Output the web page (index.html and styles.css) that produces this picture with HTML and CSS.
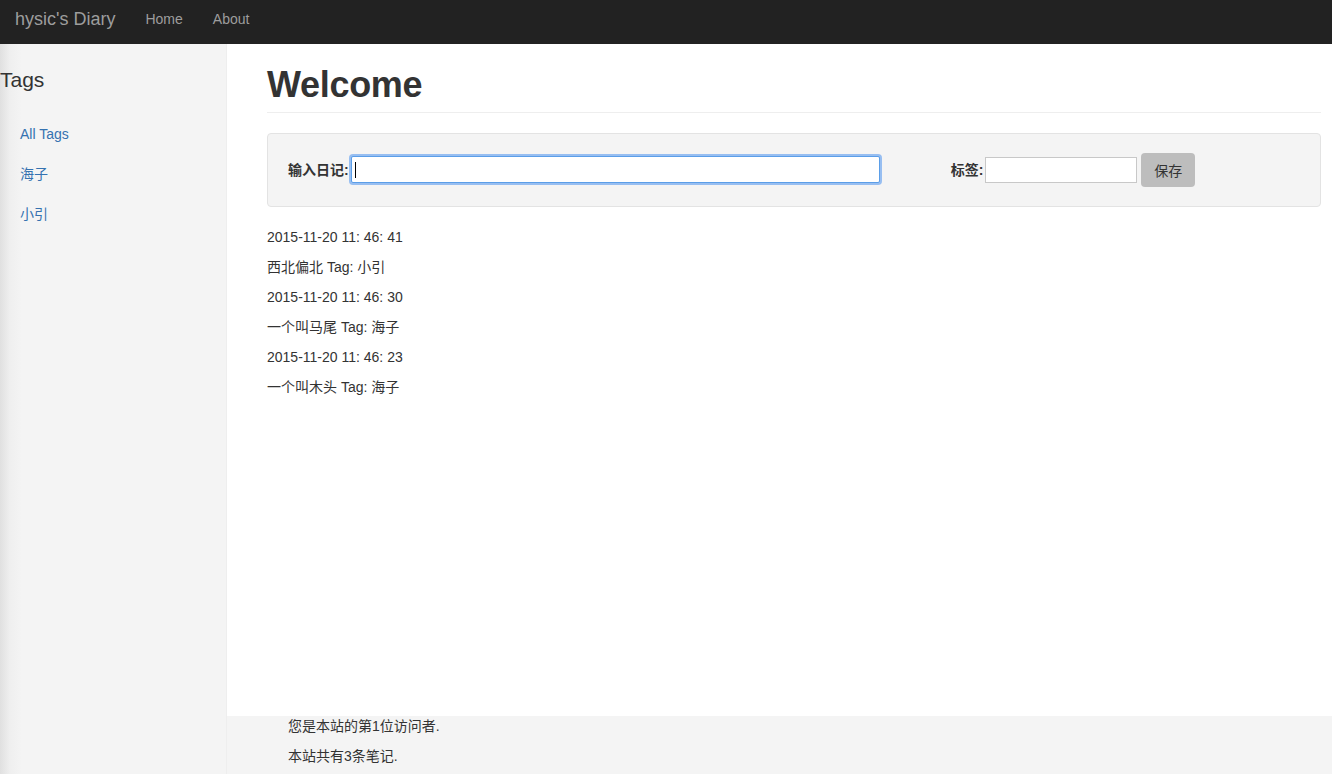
FILE: index.html
```html
<!DOCTYPE html>
<html lang="zh">
<head>
<meta charset="utf-8">
<title>hysic's Diary</title>
<link rel="stylesheet" href="styles.css">
</head>
<body>
<nav class="navbar">
  <a class="brand" href="#">hysic's Diary</a>
  <a class="nav-link" href="#">Home</a>
  <a class="nav-link" href="#">About</a>
</nav>
<div class="layout">
  <aside class="sidebar">
    <h3 class="sidebar-title">Tags</h3>
    <ul class="tag-list">
      <li><a href="#">All Tags</a></li>
      <li><a href="#">海子</a></li>
      <li><a href="#">小引</a></li>
    </ul>
  </aside>
  <div class="main">
    <div class="content">
      <h1 class="page-header">Welcome</h1>
      <form class="well">
        <label class="lbl">输入日记:</label>
        <span class="focus-field"><input class="input input-diary" type="text"></span>
        <label class="lbl lbl-tag">标签:</label>
        <input class="input input-tag" type="text">
        <button class="btn" type="button">保存</button>
      </form>
      <div class="entries">
        <p>2015-11-20 11: 46: 41</p>
        <p>西北偏北 Tag: 小引</p>
        <p>2015-11-20 11: 46: 30</p>
        <p>一个叫马尾 Tag: 海子</p>
        <p>2015-11-20 11: 46: 23</p>
        <p>一个叫木头 Tag: 海子</p>
      </div>
    </div>
    <footer class="footer">
      <p>您是本站的第1位访问者.</p>
      <p>本站共有3条笔记.</p>
    </footer>
  </div>
</div>
</body>
</html>
```

FILE: styles.css
```css
html, body {
  margin: 0;
  height: 100%;
  overflow: hidden;
}
body {
  font-family: "Liberation Sans", "Noto Sans CJK SC", sans-serif;
  font-size: 14px;
  line-height: 20px;
  color: #333;
  background: #fff;
  display: flex;
  flex-direction: column;
}
a { text-decoration: none; }

.navbar {
  height: 44px;
  box-sizing: border-box;
  padding-bottom: 6px;
  flex: none;
  background: #222;
  display: flex;
  align-items: center;
}
.brand {
  font-size: 18px;
  color: #9d9d9d;
  padding: 0 15px;
}
.nav-link {
  color: #9d9d9d;
  padding: 0 15px;
}

.layout {
  flex: 1;
  display: flex;
  min-height: 0;
}
.sidebar {
  width: 226px;
  flex: none;
  border-right: 1px solid #eee;
  background: linear-gradient(to right, #e0e0e0 0, #efefef 10px, #f4f4f4 22px, #f4f4f4 100%);
}
.sidebar-title {
  margin: 25px 0 0;
  font-size: 21px;
  font-weight: normal;
  line-height: 22px;
  color: #333;
}
.tag-list {
  list-style: none;
  margin: 23px 0 0;
  padding: 0;
}
.tag-list a {
  display: block;
  padding: 10px 20px;
  color: #3572b0;
}

.main {
  flex: 1;
  display: flex;
  flex-direction: column;
  min-width: 0;
}
.content {
  flex: 1;
  padding: 0 11px 0 40px;
}
.page-header {
  margin: 21px 0 20px;
  padding-bottom: 7px;
  border-bottom: 1px solid #eee;
  font-size: 36px;
  line-height: 39.6px;
  font-weight: bold;
  letter-spacing: -0.3px;
  color: #333;
}
.well {
  margin: 0 0 20px;
  padding: 19px 20px;
  background: #f4f4f4;
  border: 1px solid #e3e3e3;
  border-radius: 4px;
  display: flex;
  align-items: center;
  height: 34px;
}
.lbl {
  font-weight: 600;
  font-size: 14px;
  margin-right: 2px;
  color: #333;
}
.lbl-tag {
  margin-left: 71px;
  margin-right: 2px;
}
.focus-field {
  position: relative;
  display: flex;
}
.focus-field::after {
  content: "";
  position: absolute;
  left: 4px;
  top: 6px;
  width: 1px;
  height: 16px;
  background: #000;
}
.input {
  font: inherit;
  box-sizing: border-box;
  background: #fff;
  margin: 0;
  padding: 2px 4px;
  outline: none;
}
.input-diary {
  width: 529px;
  height: 27px;
  border: 1px solid #5b9ee8;
  border-radius: 2px;
  box-shadow: 0 0 0 2px rgba(120, 172, 240, 0.75);
}
.input-tag {
  width: 152px;
  height: 26px;
  border: 1px solid #c8c8c8;
}
.btn {
  margin-left: 4px;
  width: 54px;
  height: 34px;
  border: none;
  border-radius: 4px;
  background: #bdbdbd;
  color: #333;
  font-family: "Liberation Sans", "Noto Sans CJK SC", sans-serif;
  font-size: 14px;
  padding: 0;
}
.entries p {
  margin: 0 0 10px;
}

.footer {
  flex: none;
  height: 58px;
  background: #f4f4f4;
  padding-left: 61px;
  overflow: hidden;
}
.footer p {
  margin: 0 0 10px;
}
```
